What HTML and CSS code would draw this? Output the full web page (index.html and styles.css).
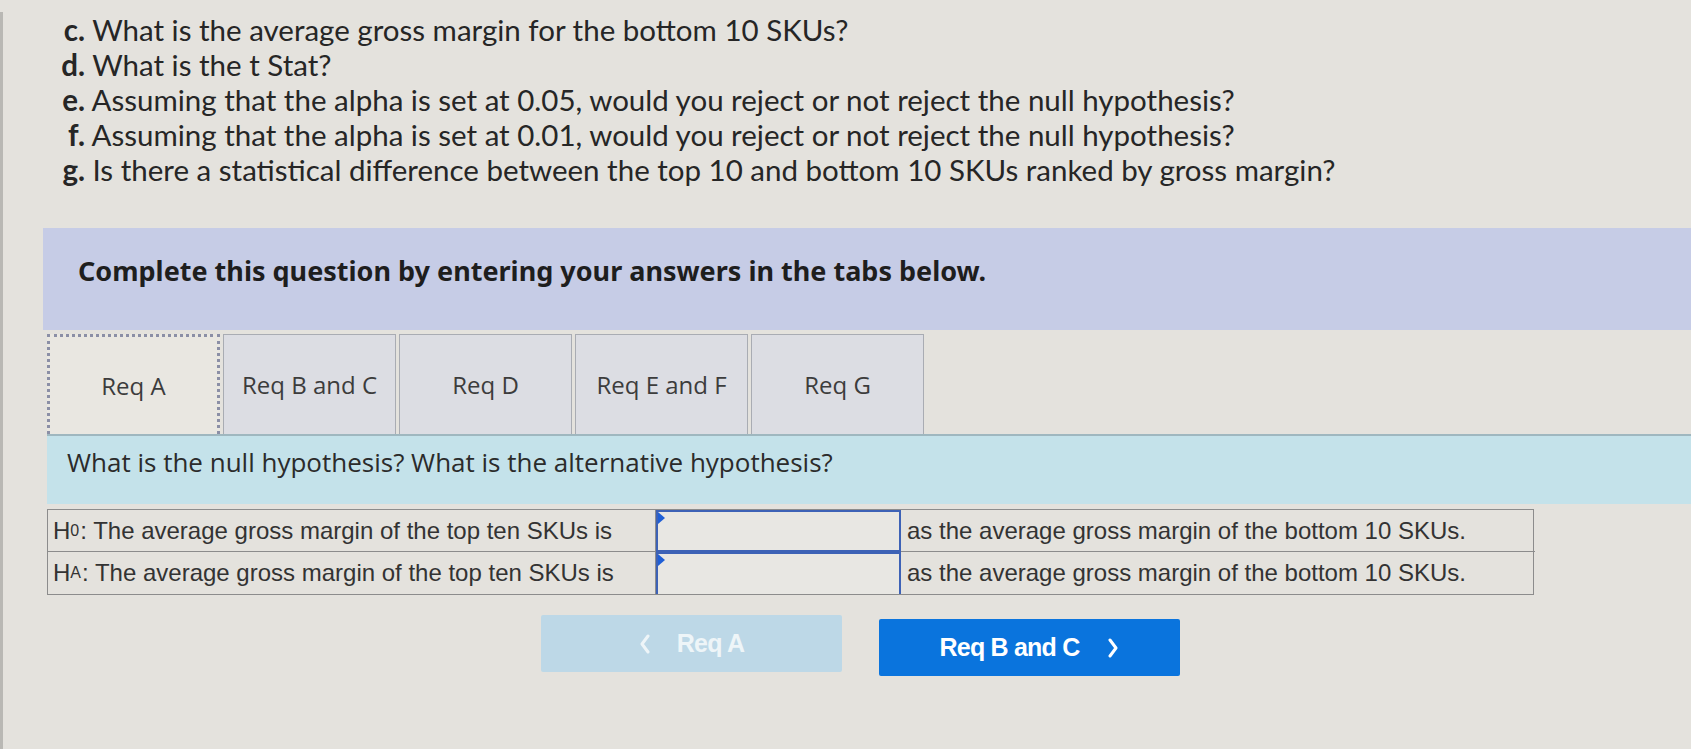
FILE: index.html
```html
<!DOCTYPE html>
<html lang="en">
<head>
<meta charset="utf-8">
<title>Req A</title>
<link rel="stylesheet" href="styles.css">
</head>
<body>
<div class="page">
  <ul class="questions">
    <li><span class="lbl">c.</span> What is the average gross margin for the bottom 10 SKUs?</li>
    <li><span class="lbl">d.</span> What is the t Stat?</li>
    <li><span class="lbl">e.</span> Assuming that the alpha is set at 0.05, would you reject or not reject the null hypothesis?</li>
    <li><span class="lbl">f.</span> Assuming that the alpha is set at 0.01, would you reject or not reject the null hypothesis?</li>
    <li><span class="lbl">g.</span> Is there a statistical difference between the top 10 and bottom 10 SKUs ranked by gross margin?</li>
  </ul>

  <div class="work">
    <div class="banner">Complete this question by entering your answers in the tabs below.</div>

    <div class="tabs">
      <div class="tab active">Req A</div>
      <div class="tab">Req B and C</div>
      <div class="tab">Req D</div>
      <div class="tab">Req E and F</div>
      <div class="tab">Req G</div>
    </div>

    <div class="prompt">What is the null hypothesis? What is the alternative hypothesis?</div>

    <div class="hyp">
      <div class="cell lead">H<sub>0</sub>: The average gross margin of the top ten SKUs is</div>
      <div class="cell input"><span class="flag"></span></div>
      <div class="cell tail">as the average gross margin of the bottom 10 SKUs.</div>
      <div class="cell lead">H<sub>A</sub>: The average gross margin of the top ten SKUs is</div>
      <div class="cell input"><span class="flag"></span></div>
      <div class="cell tail">as the average gross margin of the bottom 10 SKUs.</div>
    </div>

    <div class="nav">
      <div class="btn prev"><svg class="chev left" viewBox="0 0 12 20" width="12" height="20"><polyline points="9,2 3,10 9,18" fill="none" stroke="currentColor" stroke-width="3" stroke-linecap="round" stroke-linejoin="round"/></svg><span>Req A</span></div>
      <div class="btn next"><span>Req B and C</span><svg class="chev right" viewBox="0 0 12 20" width="12" height="20"><polyline points="3,2 9,10 3,18" fill="none" stroke="currentColor" stroke-width="3" stroke-linecap="round" stroke-linejoin="round"/></svg></div>
    </div>
  </div>
</div>
</body>
</html>
```

FILE: styles.css
```css
html, body {
  margin: 0;
  padding: 0;
  background: #e4e2dd;
}
body {
  width: 1691px;
  height: 749px;
  overflow: hidden;
  font-family: "Lato", "Open Sans", sans-serif;
  color: #2a2a2a;
}
.page {
  border-left: 3px solid #b9b8b4;
  height: 749px;
  box-sizing: border-box;
}
.questions {
  list-style: none;
  margin: 12px 0 0 0;
  padding: 0 0 0 57px;
  font-size: 29.5px;
  line-height: 35px;
  color: #262626;
}
.questions li {
  white-space: nowrap;
}
.lbl {
  display: inline-block;
  width: 25px;
  text-align: right;
  font-weight: 700;
}
.work {
  margin: 41px 0 0 44px;
}
.banner {
  margin-left: -4px;
  height: 102px;
  box-sizing: border-box;
  padding: 27px 0 0 35px;
  background: #c6cce6;
  font-family: "Noto Sans", "Open Sans", sans-serif;
  font-weight: 700;
  font-size: 27px;
  line-height: 32px;
  color: #1e1e1e;
}
.tabs {
  display: flex;
  gap: 3px;
  margin-top: 4px;
  height: 100px;
}
.tab {
  width: 173px;
  display: flex;
  align-items: center;
  justify-content: center;
  background: #dcdde3;
  border: 1px solid #a9acb3;
  border-bottom: none;
  font-family: "Open Sans", sans-serif;
  font-size: 24px;
  color: #3c3c3c;
  box-sizing: border-box;
}
.tab.active {
  background: #e9e7e1;
  border: 3px dotted #8b8fa6;
  border-bottom: none;
}
.prompt {
  height: 70px;
  box-sizing: border-box;
  padding: 10px 0 0 20px;
  background: #c4e2ea;
  border-top: 2px solid #9fb7bf;
  font-family: "Open Sans", sans-serif;
  font-size: 26px;
  line-height: 32px;
  color: #2b2b2b;
}
.hyp {
  display: grid;
  grid-template-columns: 608px 245px 634px;
  grid-auto-rows: 42px;
  margin-top: 5px;
  width: 1487px;
  border: 1px solid #8c8c8c;
  box-sizing: border-box;
  font-family: "Liberation Sans", Arial, sans-serif;
  font-size: 24px;
  color: #333;
}
.cell {
  display: flex;
  align-items: center;
  padding: 0 5px;
  border-bottom: 1px solid #8c8c8c;
  white-space: nowrap;
}
.cell:nth-last-child(-n+3) {
  border-bottom: none;
}
.cell sub {
  font-size: 16px;
  vertical-align: -6px;
  margin-right: 1px;
}
.lead {
  border-right: 1px solid #8c8c8c;
}
.tail {
  padding-left: 6px;
}
.input {
  position: relative;
  border: 2px solid #3d62b6;
  background: #e8e7e3;
}
.flag {
  position: absolute;
  left: 0;
  top: 0;
  width: 0;
  height: 0;
  border-top: 6px solid transparent;
  border-bottom: 6px solid transparent;
  border-left: 7px solid #1f5fd6;
}
.nav {
  display: flex;
  gap: 37px;
  margin: 20px 0 0 494px;
}
.btn {
  width: 301px;
  height: 57px;
  display: flex;
  align-items: center;
  justify-content: center;
  border-radius: 2px;
  font-family: "Liberation Sans", Arial, sans-serif;
  font-weight: 700;
  font-size: 25px;
  letter-spacing: -0.8px;
}
.btn.prev {
  background: #bdd8e7;
  color: #eef5f8;
}
.btn.next {
  background: #0a74dd;
  color: #ffffff;
  margin-top: 4px;
}
.chev.left {
  margin-right: 26px;
}
.chev.right {
  margin-left: 28px;
}
```
